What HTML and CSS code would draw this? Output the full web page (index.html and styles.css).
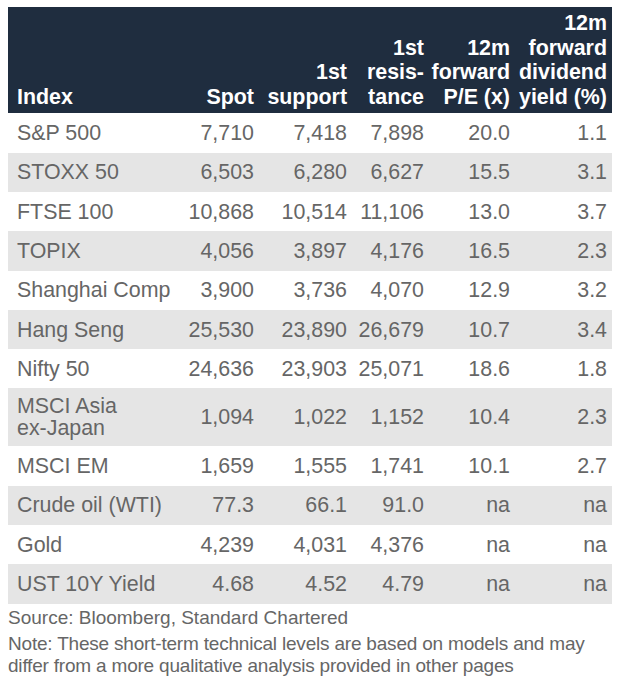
FILE: index.html
```html
<!DOCTYPE html>
<html lang="en">
<head>
<meta charset="utf-8">
<title>Index technical levels</title>
<link rel="stylesheet" href="styles.css">
</head>
<body>
<div class="wrap">
  <table class="levels">
    <colgroup>
      <col class="c-index"><col class="c-spot"><col class="c-sup"><col class="c-res"><col class="c-pe"><col class="c-yld">
    </colgroup>
    <thead>
      <tr>
        <th class="name">Index</th>
        <th>Spot</th>
        <th>1st<br>support</th>
        <th>1st<br>resis-<br>tance</th>
        <th>12m<br>forward<br>P/E (x)</th>
        <th>12m<br>forward<br>dividend<br>yield (%)</th>
      </tr>
    </thead>
    <tbody>
      <tr><td class="name">S&amp;P 500</td><td>7,710</td><td>7,418</td><td>7,898</td><td>20.0</td><td>1.1</td></tr>
      <tr class="alt"><td class="name">STOXX 50</td><td>6,503</td><td>6,280</td><td>6,627</td><td>15.5</td><td>3.1</td></tr>
      <tr><td class="name">FTSE 100</td><td>10,868</td><td>10,514</td><td>11,106</td><td>13.0</td><td>3.7</td></tr>
      <tr class="alt"><td class="name">TOPIX</td><td>4,056</td><td>3,897</td><td>4,176</td><td>16.5</td><td>2.3</td></tr>
      <tr><td class="name">Shanghai Comp</td><td>3,900</td><td>3,736</td><td>4,070</td><td>12.9</td><td>3.2</td></tr>
      <tr class="alt"><td class="name">Hang Seng</td><td>25,530</td><td>23,890</td><td>26,679</td><td>10.7</td><td>3.4</td></tr>
      <tr><td class="name">Nifty 50</td><td>24,636</td><td>23,903</td><td>25,071</td><td>18.6</td><td>1.8</td></tr>
      <tr class="alt"><td class="name">MSCI Asia<br>ex-Japan</td><td>1,094</td><td>1,022</td><td>1,152</td><td>10.4</td><td>2.3</td></tr>
      <tr><td class="name">MSCI EM</td><td>1,659</td><td>1,555</td><td>1,741</td><td>10.1</td><td>2.7</td></tr>
      <tr class="alt"><td class="name">Crude oil (WTI)</td><td>77.3</td><td>66.1</td><td>91.0</td><td>na</td><td>na</td></tr>
      <tr><td class="name">Gold</td><td>4,239</td><td>4,031</td><td>4,376</td><td>na</td><td>na</td></tr>
      <tr class="alt"><td class="name">UST 10Y Yield</td><td>4.68</td><td>4.52</td><td>4.79</td><td>na</td><td>na</td></tr>
    </tbody>
  </table>
  <p class="source">Source: Bloomberg, Standard Chartered</p>
  <p class="note">Note: These short-term technical levels are based on models and may differ from a more qualitative analysis provided in other pages</p>
</div>
</body>
</html>
```
FILE: styles.css
```css
html, body {
  margin: 0;
  padding: 0;
  background: #ffffff;
}
body {
  padding: 7px 0 0 8px;
  font-family: "Liberation Sans", Arial, Helvetica, sans-serif;
  color: #666666;
}
.wrap {
  width: 604px;
}
.levels {
  width: 604px;
  border-collapse: collapse;
  table-layout: fixed;
  font-size: 21.4px;
}
.c-index { width: 172px; }
.c-spot { width: 79px; }
.c-sup { width: 93px; }
.c-res { width: 77px; }
.c-pe { width: 86px; }
.c-yld { width: 97px; }

.levels thead tr {
  background: #1f2d3f;
}
.levels th {
  color: #ffffff;
  font-weight: bold;
  text-align: right;
  vertical-align: bottom;
  line-height: 24.6px;
  padding: 4px 5px 4px 0;
  white-space: nowrap;
}
.levels th.name {
  text-align: left;
  padding-left: 9px;
}
.levels tbody tr {
  height: 39.3px;
}
.levels tbody tr.alt {
  background: #e5e5e5;
}
.levels td {
  text-align: right;
  vertical-align: middle;
  line-height: 22px;
  padding: 7px 5px 7px 0;
  white-space: nowrap;
}
.levels td.name {
  text-align: left;
  padding-left: 9px;
}
.source, .note {
  margin: 0;
  font-size: 19px;
  line-height: 22px;
  color: #666666;
}
.source {
  margin-top: 3px;
}
.note {
  margin-top: 4px;
  letter-spacing: -0.2px;
}
```
